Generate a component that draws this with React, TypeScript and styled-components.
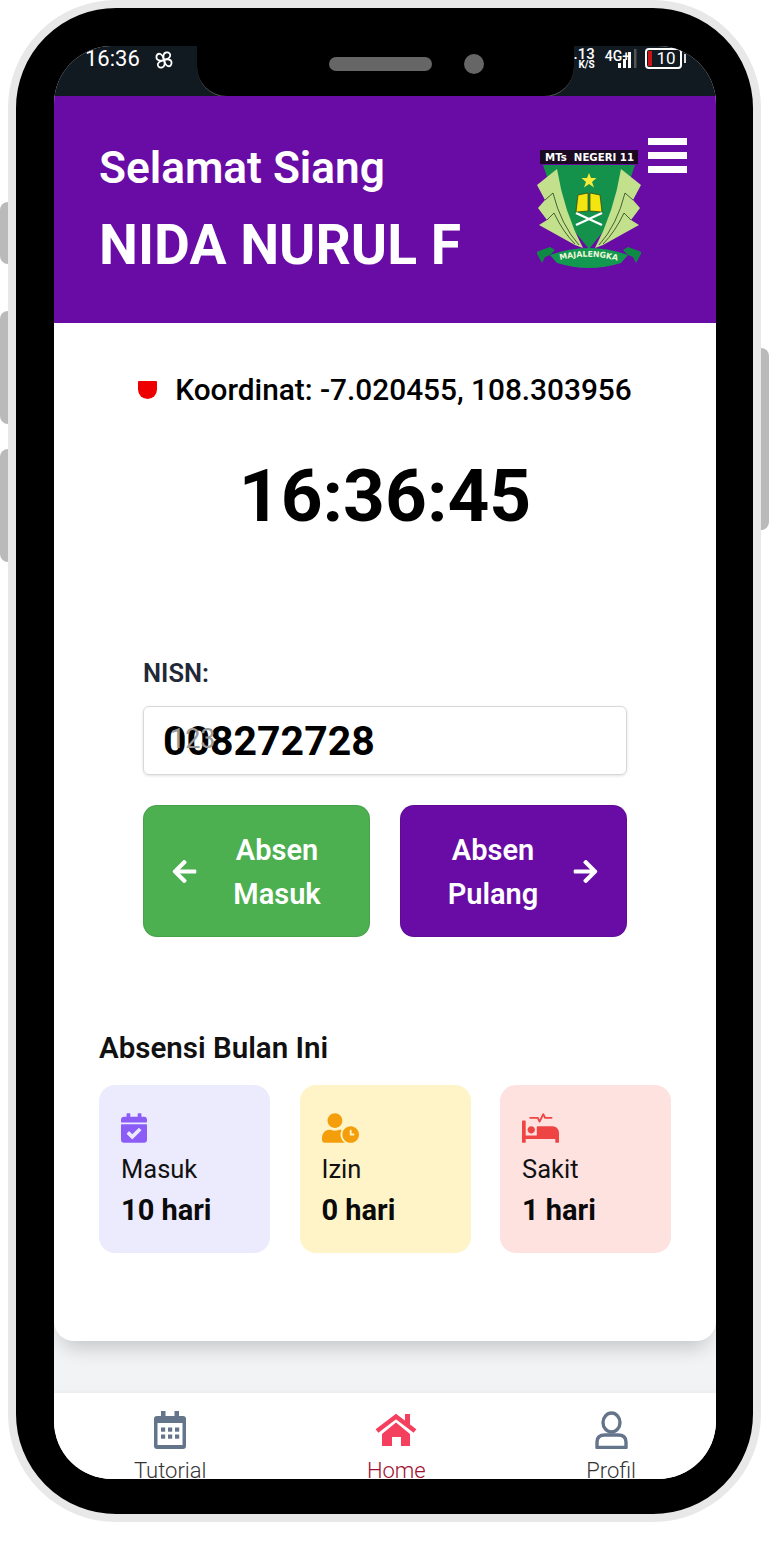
import styled, { createGlobalStyle } from "styled-components";
import {
  FaArrowLeft,
  FaArrowRight,
  FaCalendarCheck,
  FaProcedures,
  FaUserClock,
} from "react-icons/fa";

const PURPLE = "#680ca5";

const GlobalStyle = createGlobalStyle`
  html, body {
    margin: 0;
    padding: 0;
    background: #fff;
    font-family: Roboto, "Liberation Sans", sans-serif;
  }
`;

const Page = styled.div`
  width: 770px;
  height: 1558px;
  overflow: hidden;
  padding-left: 8px;
  box-sizing: border-box;
`;

const Phone = styled.div`
  position: relative;
  width: 753px;
  height: 1522px;
  box-sizing: border-box;
  border: 8px solid #e8e8e8;
  border-radius: 108px;
  background: #000;
  padding: 38px 37px 35px 38px;
`;

const SideButton = styled.span<{ $side: "left" | "right"; $top: number; $height: number }>`
  position: absolute;
  ${({ $side }) => ($side === "left" ? "left: -16px;" : "right: -16px;")}
  top: ${({ $top }) => $top - 8}px;
  width: 8px;
  height: ${({ $height }) => $height}px;
  background: #bababa;
  border-radius: ${({ $side }) => ($side === "left" ? "8px 0 0 8px" : "0 8px 8px 0")};
`;

const Screen = styled.div`
  position: relative;
  height: 100%;
  border-radius: 58px;
  overflow: hidden;
  background: #f2f3f5;
  display: flex;
  flex-direction: column;
`;

const StatusBar = styled.div`
  height: 50px;
  flex-shrink: 0;
  box-sizing: border-box;
  background: #111921;
  color: #fff;
  display: flex;
  justify-content: space-between;
  padding: 2px 34px 0 31px;
`;

const StatusLeft = styled.div`
  display: flex;
  align-items: flex-start;
  gap: 14px;
  font-size: 22px;
  line-height: 22px;
`;

const StatusRight = styled.div`
  display: flex;
  align-items: flex-start;
  gap: 8px;
`;

const Speed = styled.div`
  display: flex;
  flex-direction: column;
  align-items: flex-end;
  margin-right: 2px;
  font-size: 15px;
  line-height: 12px;
  font-weight: 500;
  & > small {
    font-size: 10px;
    line-height: 10px;
    font-weight: 700;
  }
`;

const Network = styled.div`
  display: flex;
  align-items: flex-start;
  font-size: 14px;
  line-height: 14px;
  font-weight: 500;
  padding-top: 1px;
  & > svg {
    margin-left: -12px;
  }
`;

const Battery = styled.div`
  position: relative;
  width: 37px;
  height: 21px;
  box-sizing: border-box;
  border: 2px solid #fff;
  border-radius: 4px;
  text-align: center;
  font-size: 17px;
  line-height: 17px;
  padding-left: 5px;
  &::before {
    content: "";
    position: absolute;
    left: 1px;
    top: 1px;
    bottom: 1px;
    width: 4px;
    background: #c81414;
  }
  &::after {
    content: "";
    position: absolute;
    right: -6px;
    top: 4px;
    width: 2px;
    height: 9px;
    background: #ddd;
  }
`;

const Notch = styled.div`
  position: absolute;
  left: 143px;
  top: 0;
  width: 377px;
  height: 51px;
  background: #000;
  border-radius: 0 0 30px 30px;
  border-bottom: 1px solid #555;
  box-sizing: border-box;
  display: flex;
  align-items: center;
  justify-content: center;
  gap: 32px;
  padding: 0 0 14px 41px;
`;

const Speaker = styled.span`
  width: 103px;
  height: 14px;
  border-radius: 7px;
  background: #666;
`;

const Camera = styled.span`
  width: 20px;
  height: 20px;
  border-radius: 50%;
  background: #666;
`;

const Header = styled.header`
  position: relative;
  height: 227px;
  flex-shrink: 0;
  box-sizing: border-box;
  background: ${PURPLE};
  color: #fff;
  padding: 46px 29px 0 45px;
  display: flex;
  justify-content: space-between;
`;

const Greeting = styled.div`
  font-size: 44.2px;
  font-weight: 600;
  line-height: 52px;
  white-space: nowrap;
`;

const Name = styled.div`
  margin-top: 21px;
  font-size: 55.2px;
  font-weight: 700;
  line-height: 60px;
  white-space: nowrap;
`;

const HeaderRight = styled.div`
  display: flex;
  align-items: flex-start;
  gap: 7px;
`;

const SchoolLogo = styled.svg`
  width: 104px;
  height: 120px;
  margin-top: 8px;
  flex-shrink: 0;
`;

const Burger = styled.div`
  display: flex;
  flex-direction: column;
  gap: 7px;
  margin-top: -4px;
  & > span {
    display: block;
    width: 39px;
    height: 7px;
    background: #fff;
  }
`;

const Card = styled.main`
  height: 1018px;
  flex-shrink: 0;
  box-sizing: border-box;
  background: #fff;
  border-radius: 0 0 20px 20px;
  box-shadow: 0 14px 20px -8px rgba(0, 0, 0, 0.2);
  padding: 48px 45px 0;
  position: relative;
`;

const CoordRow = styled.div`
  display: flex;
  align-items: center;
  justify-content: center;
  gap: 18px;
  font-size: 29.8px;
  font-weight: 500;
  line-height: 38px;
  color: #000;
  white-space: nowrap;
`;

const Pin = styled.span`
  width: 19px;
  height: 18px;
  background: #ee0000;
  border-radius: 1px 1px 10px 10px;
`;

const Clock = styled.div`
  margin-top: 42px;
  text-align: center;
  font-size: 73px;
  font-weight: 700;
  line-height: 90px;
  color: #000;
`;

const Form = styled.div`
  margin-top: 117px;
  padding: 0 44px;
`;

const Label = styled.div`
  font-size: 25.5px;
  font-weight: 600;
  line-height: 30px;
  color: #1f2937;
`;

const InputWrap = styled.div`
  position: relative;
  margin-top: 18px;
`;

const NisnInput = styled.input`
  display: block;
  width: 100%;
  height: 69px;
  box-sizing: border-box;
  border: 1px solid #d8d8d8;
  border-radius: 6px;
  box-shadow: 0 1px 3px rgba(0, 0, 0, 0.12);
  background: transparent;
  padding: 0 19px;
  font-family: inherit;
  font-size: 41px;
  font-weight: 700;
  color: #000;
  outline: none;
`;

const Ghost = styled.span`
  position: absolute;
  left: 27px;
  top: 18px;
  font-size: 27px;
  line-height: 30px;
  color: #9a9a9a;
`;

const Buttons = styled.div`
  display: grid;
  grid-template-columns: 227px 227px;
  justify-content: space-between;
  margin-top: 30px;
`;

const AbsenButton = styled.button<{ $color: string; $reverse?: boolean }>`
  height: 132px;
  box-sizing: border-box;
  border: 1px solid rgba(0, 0, 0, 0.08);
  border-radius: 14px;
  background: ${({ $color }) => $color};
  color: #fff;
  font-family: inherit;
  font-size: 29px;
  font-weight: 600;
  line-height: 44px;
  display: flex;
  flex-direction: ${({ $reverse }) => ($reverse ? "row-reverse" : "row")};
  align-items: center;
  padding: ${({ $reverse }) => ($reverse ? "1px 27px 0 13px" : "1px 13px 0 27px")};
  & > svg {
    font-size: 27px;
    flex-shrink: 0;
  }
  & > span {
    flex: 1;
    text-align: center;
  }
`;

const SectionTitle = styled.h2`
  margin: 93px 0 0;
  font-size: 29.5px;
  font-weight: 600;
  line-height: 36px;
  color: #111;
`;

const Stats = styled.div`
  display: grid;
  grid-template-columns: repeat(3, 171px);
  justify-content: space-between;
  margin-top: 19px;
`;

const StatCard = styled.div<{ $bg: string; $accent: string; $iconWidth: number }>`
  height: 168px;
  box-sizing: border-box;
  border-radius: 16px;
  background: ${({ $bg }) => $bg};
  padding: 28px 22px 0;
  & > svg {
    display: block;
    color: ${({ $accent }) => $accent};
    height: 30px;
    width: ${({ $iconWidth }) => $iconWidth}px;
  }
`;

const StatLabel = styled.div`
  margin-top: 10px;
  font-size: 25.5px;
  line-height: 32px;
  color: #111;
`;

const StatValue = styled.div`
  margin-top: 7px;
  font-size: 29px;
  font-weight: 700;
  line-height: 36px;
  color: #0a0a0a;
`;

const BottomNav = styled.nav`
  margin-top: 52px;
  flex: 1;
  min-height: 0;
  overflow: hidden;
  background: #fff;
  box-shadow: 0 -2px 4px rgba(0, 0, 0, 0.03);
  display: flex;
  justify-content: space-between;
  padding: 18px 80px 0;
`;

const NavItem = styled.div<{ $text: string }>`
  display: flex;
  flex-direction: column;
  align-items: center;
  gap: 9px;
  color: ${({ $text }) => $text};
  font-size: 22px;
  font-weight: 300;
  line-height: 26px;
  & > svg {
    height: 38px;
    width: auto;
    flex-shrink: 0;
  }
`;

function Pinwheel() {
  return (
    <svg width="20" height="18" viewBox="-10 -9 20 18" fill="none" stroke="#fff" strokeWidth="1.8" style={{ marginTop: 3 }}>
      {[0, 90, 180, 270].map((angle) => (
        <path key={angle} d="M0 0C-1-3-1-7 2-7.5S7-6 6-3.5 3-1 0 0Z" transform={`rotate(${angle})`} />
      ))}
    </svg>
  );
}

function Signal() {
  return (
    <svg width="19" height="20" viewBox="0 0 19 20" fill="#fff">
      <rect x="0" y="14" width="3" height="5" />
      <rect x="5" y="10" width="3" height="9" />
      <rect x="10" y="3" width="3" height="16" />
      <rect x="16" y="0" width="2.5" height="19" fill="#555" />
    </svg>
  );
}

function Logo() {
  const wing = "M20 19 L0 35 L8 50 L1 58 L10 70 L2 75 L38 95 L46 98 Q27 62 20 19Z";
  return (
    <SchoolLogo viewBox="0 0 104 120">
      <defs>
        <path id="ribbonArc" d="M23 110 Q52 103 81 111" />
      </defs>
      <path d="M6 15 H98 L82 62 L52 99 L22 62Z" fill="#14924c" />
      <path d={wing} fill="#c3e08c" />
      <path d={wing} fill="#c3e08c" transform="matrix(-1 0 0 1 104 0)" />
      <g fill="none" stroke="#24401c" strokeWidth="0.8">
        <path d="M8 50 L16 43 Q24 75 42 95" />
        <path d="M10 70 L17 63 Q26 82 38 94" />
        <path d="M96 50 L88 43 Q80 75 62 95" />
        <path d="M94 70 L87 63 Q78 82 66 94" />
      </g>
      <rect x="3" y="0" width="98" height="14" fill="#1a0a22" />
      <text
        x="8"
        y="11"
        fontSize="10.5"
        fontWeight="700"
        fill="#fff"
        fontFamily="'DejaVu Sans', sans-serif"
        textLength="89"
        lengthAdjust="spacingAndGlyphs"
        xmlSpace="preserve"
      >
        MTs  NEGERI 11
      </text>
      <polygon points="52,23 54,28 59.5,28 55,32 57,37.5 52,34 47,37.5 49,32 44.500,28 50,28" fill="#f7ec3a" />
      <path d="M41 45 L51 43 L51 61 L39 62Z M53 43 L63 45 L65 62 L53 61Z" fill="#f3e510" stroke="#3a3a10" strokeWidth="0.7" />
      <path d="M39 75 L65 63 M39 63 L65 75" stroke="#fff" strokeWidth="2.4" />
      <path d="M-1 102 L13 97 L18 100 L13 105 L8 107 L5 113Z M105 102 L91 97 L86 100 L91 105 L96 107 L99 113Z" fill="#0e8a45" />
      <path d="M13 105 Q52 91 91 105 L84 113 Q52 123 20 113Z" fill="#12994f" />
      <text fontSize="8" fontWeight="700" fill="#eef7dc" fontFamily="'DejaVu Sans', sans-serif">
        <textPath href="#ribbonArc" textLength="58" lengthAdjust="spacingAndGlyphs">
          MAJALENGKA
        </textPath>
      </text>
    </SchoolLogo>
  );
}

function CalendarIcon() {
  return (
    <svg viewBox="0 0 33 38" fill="#64748b">
      <rect x="0" y="5" width="32" height="33" rx="3" />
      <rect x="7" y="0" width="4.500" height="9" />
      <rect x="20.500" y="0" width="4.500" height="9" />
      <rect x="3.500" y="12" width="25" height="22" fill="#fff" />
      {[7, 14, 21].map((x) =>
        [16.5, 23.500].map((y) => <rect key={`${x}-${y}`} x={x} y={y} width="4.200" height="4.200" />),
      )}
    </svg>
  );
}

function HomeIcon() {
  return (
    <svg viewBox="0 -3 42 38" fill="#f43f5e">
      <rect x="30" y="0" width="5" height="11" />
      <path d="M2 17 L21 2.500 L40 17" fill="none" stroke="#f43f5e" strokeWidth="4.500" />
      <path d="M7 20 L21 8.500 L35 20 V32 H26 V23 H17 V32 H7Z" />
    </svg>
  );
}

function ProfileIcon() {
  return (
    <svg viewBox="0 0 33 38" fill="none" stroke="#64748b" strokeWidth="3.400">
      <ellipse cx="16.500" cy="11.500" rx="8.500" ry="9.500" />
      <path d="M2 36.500 V31 Q2 24 10 24 H23 Q31 24 31 31 V36.500 Z" strokeLinejoin="round" />
    </svg>
  );
}

export default function App() {
  return (
    <Page>
      <GlobalStyle />
      <Phone>
        <SideButton $side="left" $top={202} $height={62} />
        <SideButton $side="left" $top={311} $height={113} />
        <SideButton $side="left" $top={449} $height={113} />
        <SideButton $side="right" $top={348} $height={182} />
        <Screen>
          <StatusBar>
            <StatusLeft>
              16:36 <Pinwheel />
            </StatusLeft>
            <StatusRight>
              <Speed>
                3.13
                <small>K/S</small>
              </Speed>
              <Network>
                4G+
                <Signal />
              </Network>
              <Battery>10</Battery>
            </StatusRight>
          </StatusBar>
          <Notch>
            <Speaker />
            <Camera />
          </Notch>
          <Header>
            <div>
              <Greeting>Selamat Siang</Greeting>
              <Name>NIDA NURUL F</Name>
            </div>
            <HeaderRight>
              <Logo />
              <Burger>
                <span />
                <span />
                <span />
              </Burger>
            </HeaderRight>
          </Header>
          <Card>
            <CoordRow>
              <Pin />
              Koordinat: -7.020455, 108.303956
            </CoordRow>
            <Clock>16:36:45</Clock>
            <Form>
              <Label>NISN:</Label>
              <InputWrap>
                <Ghost>123</Ghost>
                <NisnInput readOnly value="008272728" />
              </InputWrap>
              <Buttons>
                <AbsenButton $color="#4caf50">
                  <FaArrowLeft />
                  <span>
                    Absen
                    <br />
                    Masuk
                  </span>
                </AbsenButton>
                <AbsenButton $color={PURPLE} $reverse>
                  <FaArrowRight />
                  <span>
                    Absen
                    <br />
                    Pulang
                  </span>
                </AbsenButton>
              </Buttons>
            </Form>
            <SectionTitle>Absensi Bulan Ini</SectionTitle>
            <Stats>
              <StatCard $bg="#eceafd" $accent="#8b5cf6" $iconWidth={26}>
                <FaCalendarCheck />
                <StatLabel>Masuk</StatLabel>
                <StatValue>10 hari</StatValue>
              </StatCard>
              <StatCard $bg="#fef4c7" $accent="#f59e0b" $iconWidth={37}>
                <FaUserClock />
                <StatLabel>Izin</StatLabel>
                <StatValue>0 hari</StatValue>
              </StatCard>
              <StatCard $bg="#fee2e0" $accent="#ef4444" $iconWidth={37}>
                <FaProcedures />
                <StatLabel>Sakit</StatLabel>
                <StatValue>1 hari</StatValue>
              </StatCard>
            </Stats>
          </Card>
          <BottomNav>
            <NavItem $text="#333">
              <CalendarIcon />
              Tutorial
            </NavItem>
            <NavItem $text="#a01030">
              <HomeIcon />
              Home
            </NavItem>
            <NavItem $text="#333">
              <ProfileIcon />
              Profil
            </NavItem>
          </BottomNav>
        </Screen>
      </Phone>
    </Page>
  );
}
